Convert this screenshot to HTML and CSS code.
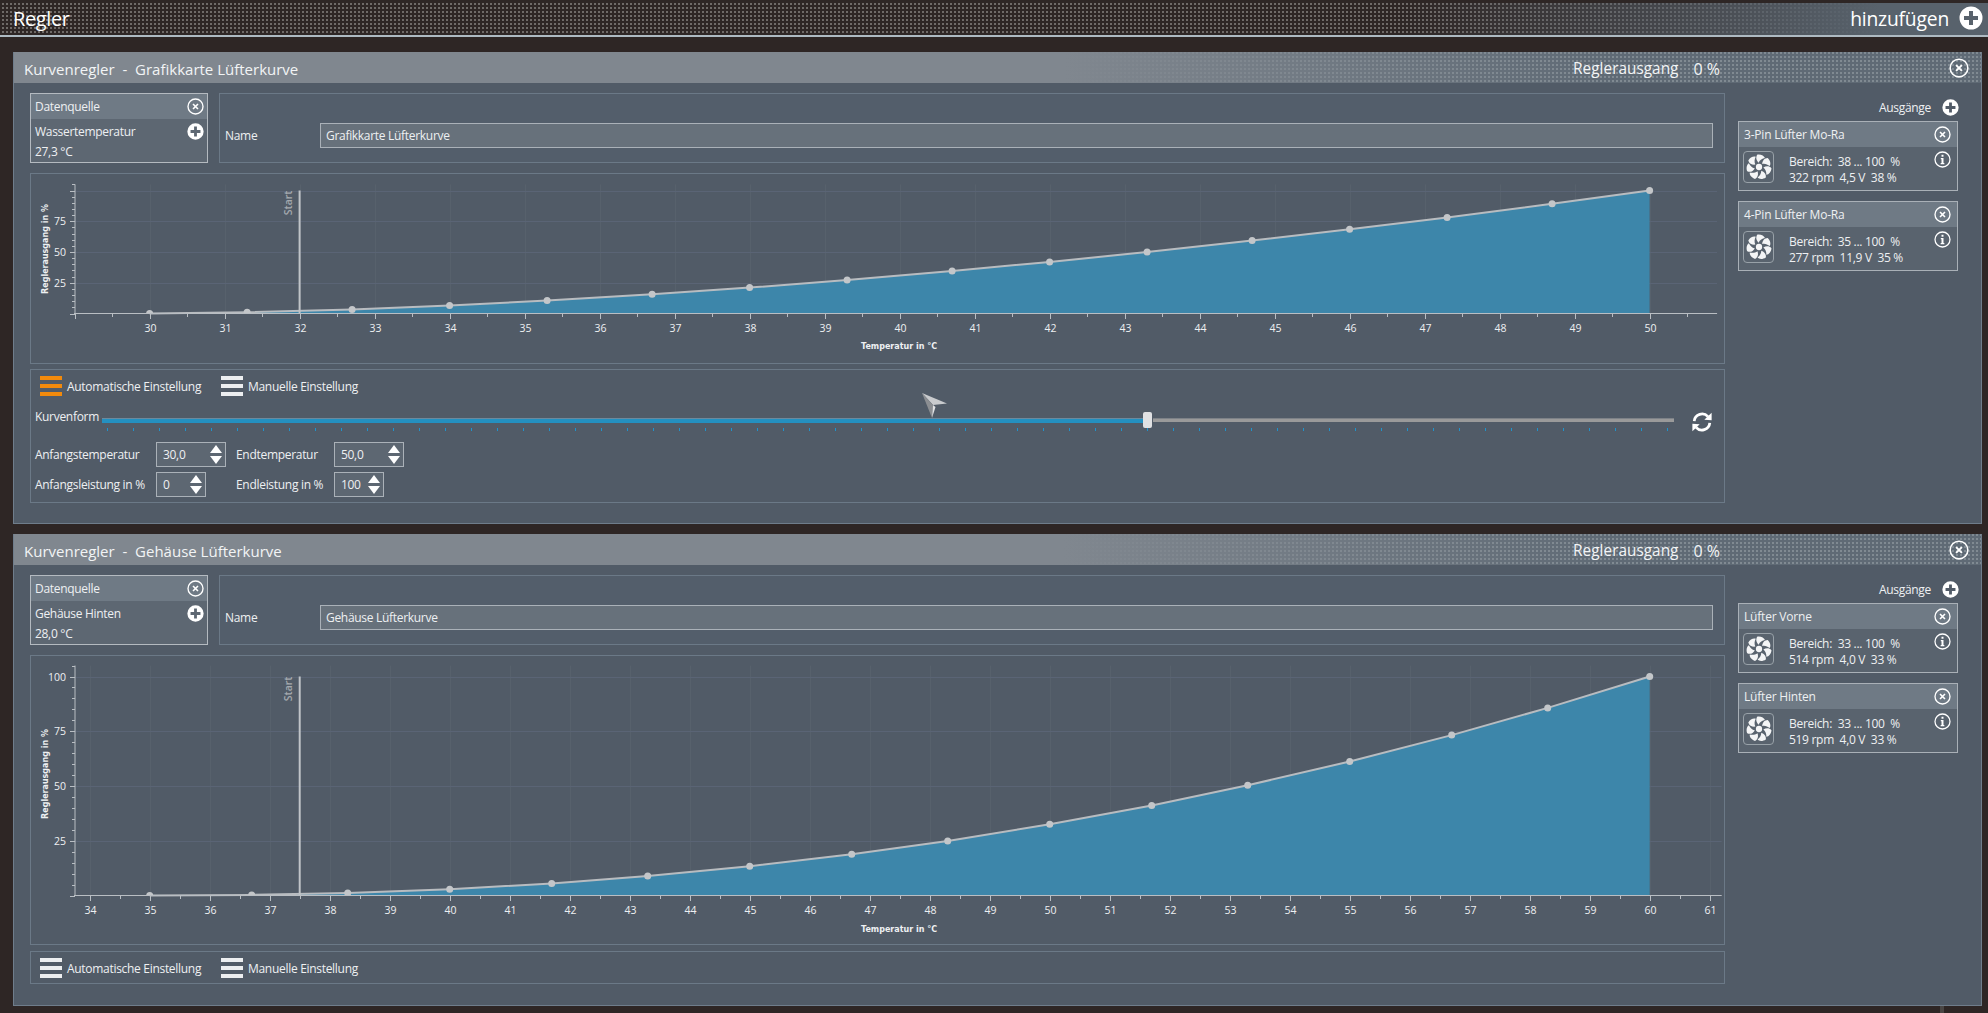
FILE: index.html
```html
<!doctype html>
<html>
<head>
    <meta charset="utf-8">
    <title>Regler</title>
    <link rel="stylesheet" href="styles.css">
</head>
<body>

<svg class="defs" width="0" height="0">
    <symbol id="ic-close" viewBox="0 0 24 24">
        <circle cx="12" cy="12" r="10.6" fill="none" stroke="currentColor" stroke-width="1.9"/>
        <path d="M8.500 8.500l7 7M15.500 8.500l-7 7" fill="none" stroke="currentColor" stroke-width="2.300"/>
    </symbol>
    <symbol id="ic-plus" viewBox="0 0 24 24">
        <path fill="currentColor" fill-rule="evenodd" d="M12 .5a11.5 11.5 0 1 0 0 23a11.5 11.5 0 1 0 0-23z M10 5h4v5h5v4h-5v5h-4v-5H5v-4h5z"/>
    </symbol>
    <symbol id="ic-info" viewBox="0 0 24 24">
        <circle cx="12" cy="12" r="10.6" fill="none" stroke="currentColor" stroke-width="1.8"/>
        <path fill="currentColor" d="M10.600 5.200h2.800v2.800h-2.800z M9.600 10h3.800v7h1.200v1.600H9.400V17h1.200v-5.400h-1z"/>
    </symbol>
    <symbol id="ic-fan" viewBox="0 0 32 32">
        <circle cx="16" cy="16" r="3.600" fill="currentColor"/>
        <g fill="currentColor">
            <path d="M15.500 11C13 8.500 11.800 5 14.200 1.800C18 1.200 22 3 22.800 5.800C19.800 6.400 17 8 15.500 11z"/>
            <path d="M15.500 11C13 8.500 11.800 5 14.200 1.800C18 1.200 22 3 22.800 5.800C19.800 6.400 17 8 15.500 11z" transform="rotate(51.4 16 16)"/>
            <path d="M15.500 11C13 8.500 11.800 5 14.200 1.800C18 1.200 22 3 22.800 5.800C19.800 6.400 17 8 15.500 11z" transform="rotate(102.900 16 16)"/>
            <path d="M15.500 11C13 8.500 11.800 5 14.200 1.800C18 1.200 22 3 22.800 5.800C19.800 6.400 17 8 15.500 11z" transform="rotate(154.300 16 16)"/>
            <path d="M15.500 11C13 8.500 11.800 5 14.200 1.800C18 1.200 22 3 22.800 5.800C19.800 6.400 17 8 15.500 11z" transform="rotate(205.700 16 16)"/>
            <path d="M15.500 11C13 8.500 11.800 5 14.200 1.800C18 1.200 22 3 22.800 5.800C19.800 6.400 17 8 15.500 11z" transform="rotate(257.100 16 16)"/>
            <path d="M15.500 11C13 8.500 11.800 5 14.200 1.800C18 1.200 22 3 22.800 5.800C19.800 6.400 17 8 15.500 11z" transform="rotate(308.600 16 16)"/>
        </g>
    </symbol>
    <symbol id="ic-refresh" viewBox="0 0 24 24">
        <path fill="none" stroke="currentColor" stroke-width="3" d="M3.500 11a8.600 8.600 0 0 1 15-4.800"/>
        <path fill="currentColor" d="M14.500 9.500L22.500 10V2z"/>
        <path fill="none" stroke="currentColor" stroke-width="3" d="M20.500 13a8.600 8.600 0 0 1-15 4.800"/>
        <path fill="currentColor" d="M9.500 14.500L1.500 14v8z"/>
    </symbol>
    <symbol id="ic-cursor" viewBox="0 0 25 25">
        <path fill="#c9cbce" d="M0 0L25 10.500L11 12z"/>
        <path fill="#8b8e92" d="M0 0L11 12L10 25z"/>
        <path fill="#e2e3e5" d="M10 25L11 12L13.500 14z"/>
    </symbol>
</svg>

<div class="topbar">
    <span class="topbar-title">Regler</span>
    <span class="topbar-add">hinzufügen</span>
    <svg class="ic ic-top"><use href="#ic-plus"/></svg>
</div>

<div class="main">

    <div class="panel">
        <div class="panel-head">
            <span class="panel-title">Kurvenregler&nbsp; -&nbsp; Grafikkarte Lüfterkurve</span>
            <span class="panel-out">Reglerausgang</span>
            <span class="panel-val">0 %</span>
            <svg class="ic ic-head"><use href="#ic-close"/></svg>
        </div>
        <div class="panel-body">
            <div class="left">
                <div class="top-row">
                    <div class="source">
                        <div class="source-head"><span>Datenquelle</span><svg class="ic"><use href="#ic-close"/></svg></div>
                        <div class="source-name"><span>Wassertemperatur</span><svg class="ic"><use href="#ic-plus"/></svg></div>
                        <div class="source-val">27,3 °C</div>
                    </div>
                    <div class="name-box">
                        <span class="name-label">Name</span>
                        <div class="name-input">Grafikkarte Lüfterkurve</div>
                    </div>
                </div>
                <div class="box chart chart-short" id="chart-a"></div>
                <div class="box controls">
                    <div class="modes">
                        <div class="bars bars-on"><i></i><i></i><i></i></div>
                        <span class="mode-text">Automatische Einstellung</span>
                        <div class="bars"><i></i><i></i><i></i></div>
                        <span>Manuelle Einstellung</span>
                    </div>
                    <div class="slider-row">
                        <span class="slider-label">Kurvenform</span>
                        <div class="slider">
                            <div class="track">
                                <div class="track-on"></div>
                                <div class="thumb"></div>
                                <div class="track-off"></div>
                            </div>
                            <div class="ticks"></div>
                        </div>
                        <svg class="ic-refresh"><use href="#ic-refresh"/></svg>
                        <svg class="ic-cursor"><use href="#ic-cursor"/></svg>
                    </div>
                    <div class="spins">
                        <span>Anfangstemperatur</span>
                        <div class="spin spin-wide"><span>30,0</span><div class="arrows"><i class="up"></i><i class="down"></i></div></div>
                        <span>Endtemperatur</span>
                        <div class="spin spin-wide"><span>50,0</span><div class="arrows"><i class="up"></i><i class="down"></i></div></div>
                        <span>Anfangsleistung in %</span>
                        <div class="spin"><span>0</span><div class="arrows"><i class="up"></i><i class="down"></i></div></div>
                        <span>Endleistung in %</span>
                        <div class="spin"><span>100</span><div class="arrows"><i class="up"></i><i class="down"></i></div></div>
                    </div>
                </div>
            </div>
            <div class="right">
                <div class="out-head"><span>Ausgänge</span><svg class="ic"><use href="#ic-plus"/></svg></div>
                <div class="card">
                    <div class="card-head"><span>3-Pin Lüfter Mo-Ra</span><svg class="ic"><use href="#ic-close"/></svg></div>
                    <div class="card-body">
                        <div class="fan"><svg><use href="#ic-fan"/></svg></div>
                        <div class="card-text">Bereich:&nbsp; 38 ... 100&nbsp; %<br>322 rpm&nbsp; 4,5 V&nbsp; 38 %</div>
                        <svg class="ic"><use href="#ic-info"/></svg>
                    </div>
                </div>
                <div class="card">
                    <div class="card-head"><span>4-Pin Lüfter Mo-Ra</span><svg class="ic"><use href="#ic-close"/></svg></div>
                    <div class="card-body">
                        <div class="fan"><svg><use href="#ic-fan"/></svg></div>
                        <div class="card-text">Bereich:&nbsp; 35 ... 100&nbsp; %<br>277 rpm&nbsp; 11,9 V&nbsp; 35 %</div>
                        <svg class="ic"><use href="#ic-info"/></svg>
                    </div>
                </div>
            </div>
        </div>
    </div>

    <div class="panel">
        <div class="panel-head">
            <span class="panel-title">Kurvenregler&nbsp; -&nbsp; Gehäuse Lüfterkurve</span>
            <span class="panel-out">Reglerausgang</span>
            <span class="panel-val">0 %</span>
            <svg class="ic ic-head"><use href="#ic-close"/></svg>
        </div>
        <div class="panel-body">
            <div class="left">
                <div class="top-row">
                    <div class="source">
                        <div class="source-head"><span>Datenquelle</span><svg class="ic"><use href="#ic-close"/></svg></div>
                        <div class="source-name"><span>Gehäuse Hinten</span><svg class="ic"><use href="#ic-plus"/></svg></div>
                        <div class="source-val">28,0 °C</div>
                    </div>
                    <div class="name-box">
                        <span class="name-label">Name</span>
                        <div class="name-input">Gehäuse Lüfterkurve</div>
                    </div>
                </div>
                <div class="box chart chart-tall" id="chart-b"></div>
                <div class="box controls">
                    <div class="modes">
                        <div class="bars"><i></i><i></i><i></i></div>
                        <span class="mode-text">Automatische Einstellung</span>
                        <div class="bars"><i></i><i></i><i></i></div>
                        <span>Manuelle Einstellung</span>
                    </div>
                </div>
            </div>
            <div class="right">
                <div class="out-head"><span>Ausgänge</span><svg class="ic"><use href="#ic-plus"/></svg></div>
                <div class="card">
                    <div class="card-head"><span>Lüfter Vorne</span><svg class="ic"><use href="#ic-close"/></svg></div>
                    <div class="card-body">
                        <div class="fan"><svg><use href="#ic-fan"/></svg></div>
                        <div class="card-text">Bereich:&nbsp; 33 ... 100&nbsp; %<br>514 rpm&nbsp; 4,0 V&nbsp; 33 %</div>
                        <svg class="ic"><use href="#ic-info"/></svg>
                    </div>
                </div>
                <div class="card">
                    <div class="card-head"><span>Lüfter Hinten</span><svg class="ic"><use href="#ic-close"/></svg></div>
                    <div class="card-body">
                        <div class="fan"><svg><use href="#ic-fan"/></svg></div>
                        <div class="card-text">Bereich:&nbsp; 33 ... 100&nbsp; %<br>519 rpm&nbsp; 4,0 V&nbsp; 33 %</div>
                        <svg class="ic"><use href="#ic-info"/></svg>
                    </div>
                </div>
            </div>
        </div>
    </div>

</div>
<div class="foot-mark"></div>

<script type="text/javascript" src="chart.js"></script>
</body>
</html>
```

FILE: styles.css
```css
*{margin: 0; padding: 0; box-sizing: border-box;}
html,body{width: 100%; height: 100%; overflow: hidden;}
body{background-color: #2e2625; color: #eef0f2; font-family: "Open Sans", "Noto Sans", sans-serif; font-size: 12px; letter-spacing: -.3px;}
.defs{display: block; width: 0; height: 0;}
.ic{width: 17px; height: 17px; color: #fff; flex: none;}

.topbar{display: flex; align-items: center; height: 34px; margin-top: 3px; padding: 0 5px 2px 13px; border-bottom: 2px solid #aebac2;
    background-color: #2e2625;
    background-image: linear-gradient(90deg, rgba(88,98,108,0) 1400px, #58626c 1880px), conic-gradient(#6f6a68 25%, transparent 0);
    background-size: auto, 4px 4px;}
.topbar-title{font-size: 20px; color: #fff; flex: 1; letter-spacing: -.4px;}
.topbar-add{font-size: 19.3px; color: #fff; margin-right: 10px; letter-spacing: -.2px;}
.ic-top{width: 24px; height: 24px;}

.main{display: flex; flex-direction: column; gap: 10px; padding: 15px 6px 0 13px;}
.panel{height: 472px; background: #515b67; border: 1px solid #6f7d8b; border-top: 0;}
.panel-head{display: flex; align-items: center; height: 31px; padding: 2px 12px 0 10px; color: #f2f4f5; font-size: 15px; letter-spacing: 0;
    background-color: #5f6a75;
    background-image: linear-gradient(90deg, #80878f 1050px, rgba(128,135,143,0) 1600px), conic-gradient(#808a92 25%, transparent 0);
    background-size: auto, 4px 4px;}
.panel-title{flex: 1;}
.panel-out{font-size: 15.4px;}
.panel-val{margin: 0 229px 0 15px; font-size: 16px;}
.ic-head{width: 20px; height: 20px; margin-top: -2px;}

.panel-body{display: flex; padding: 10px 16px 0;}
.left{width: 1695px; display: flex; flex-direction: column;}
.box{border: 1px solid #6b7987;}
.top-row{display: flex; gap: 11px; height: 70px;}
.source{width: 178px; border: 1px solid #b4bac0; background: #5d6772;}
.source-head{display: flex; align-items: center; justify-content: space-between; height: 25px; padding: 0 3px 0 4px; background: #6f7a85;}
.source-name{display: flex; align-items: center; justify-content: space-between; height: 25px; padding: 0 3px 0 4px;}
.source-val{padding-left: 4px; line-height: 16px;}
.name-box{flex: 1; display: flex; align-items: center; padding: 14px 11px 0 5px; border: 1px solid #6b7987; background: #535e6b;}
.name-label{width: 95px;}
.name-input{flex: 1; height: 25px; line-height: 23px; padding-left: 5px; border: 1px solid #aab1b8; background: #67717b;}

.chart{margin-top: 10px;}
.chart svg{display: block; width: 100%; height: 100%;}
.chart-short{height: 191px;}
.chart-tall{height: 290px;}
.tick-label{fill: #eef0f2; font-size: 10.5px; text-anchor: middle; font-family: "Open Sans", sans-serif; letter-spacing: 0;}
.axis-title{fill: #eef0f2; font-size: 8px; font-weight: bold; text-anchor: middle; font-family: "DejaVu Sans", sans-serif; letter-spacing: 0;}
.start-label{fill: #a4a9ae; font-size: 10.5px; text-anchor: end; font-family: "Open Sans", sans-serif; font-weight: 600; letter-spacing: 0;}

.controls{margin-top: 5px; padding: 6px 0 5px 4px;}
.chart-tall + .controls{margin-top: 6px;}
.modes{display: flex; align-items: center; height: 20px; padding-left: 5px;}
.bars{display: flex; flex-direction: column; justify-content: space-between; width: 22px; height: 20px; margin-right: 5px;}
.bars i{display: block; height: 4px; background: #eceef0;}
.bars-on i{background: #f28a0c;}
.mode-text{width: 154px;}
.slider-row{display: flex; align-items: flex-start; margin-top: 16px; position: relative;}
.slider-label{width: 67px; margin-top: -4px;}
.slider{flex: 1;}
.track{display: flex; align-items: center; height: 16px;}
.track-on{width: 1041px; height: 5px; background: #2490c0; border-top: 1px solid #6b8a9e;}
.thumb{width: 9px; height: 16px; margin-right: 1px; border-radius: 2px; background: #e0e1e3;}
.track-off{flex: 1; height: 4px; background: #9a9a9a; border-top: 1px solid #7d8288;}
.ticks{height: 3px; margin-left: 5px; background: repeating-linear-gradient(90deg, #1f93cc 0, #1f93cc 1px, transparent 1px, transparent 26px);}
.ic-refresh{width: 22px; height: 22px; margin: -1px 11px 0 17px; color: #fff; flex: none;}
.ic-cursor{position: absolute; left: 887px; top: -19px; width: 25px; height: 25px;}
.spins{display: grid; grid-template-columns: 121px 80px 98px auto; row-gap: 5px; align-items: center; margin-top: 9px;}
.spin{display: flex; align-items: center; justify-content: space-between; width: 50px; height: 25px; padding: 0 3px 0 6px; border: 1px solid #aab1b8; background: #5d6772;}
.spin-wide{width: 70px;}
.arrows{display: flex; flex-direction: column; gap: 3px;}
.arrows i{display: block; width: 0; height: 0; border-left: 6.5px solid transparent; border-right: 6.5px solid transparent;}
.arrows .up{border-bottom: 8px solid #fff;}
.arrows .down{border-top: 8px solid #fff;}

.right{width: 220px; margin-left: 13px;}
.out-head{display: flex; align-items: center; justify-content: flex-end; height: 28px;}
.out-head .ic{margin-left: 11px; margin-right: -1px;}
.card{height: 70px; margin-bottom: 10px; border: 1px solid #a9b0b7; background: #59636e;}
.card-head{display: flex; align-items: center; justify-content: space-between; height: 25px; padding: 0 6px 0 5px; background: #6f7a85; letter-spacing: -.2px;}
.card-body{display: flex; padding: 4px 6px 0 4px;}
.fan{display: flex; align-items: center; justify-content: center; width: 31px; height: 32px; border: 1px solid #98a1a8; border-radius: 4px; color: #f4f5f6;}
.fan svg{width: 28px; height: 28px;}
.card-text{flex: 1; margin: 3px 0 0 15px; line-height: 16px;}
.foot-mark{width: 4px; height: 8px; margin: 0 0 0 1940px; background: #4a4644;}
```

FILE: chart.js
```js
// builds the two curve charts, coordinates are relative to the chart box
(function() {
    var charts = [{
        el: 'chart-a',
        x0: 118.6, tStart: 30, pxT: 75, tMin: 29, tMax: 50.9, tFirstLabel: 30,
        axisY: 139.5, pxV: 1.23, vTop: 105, w: 1689,
        pts: [30, 31.3, 32.7, 34, 35.3, 36.7, 38, 39.3, 40.7, 42, 43.3, 44.7, 46, 47.3, 48.7, 50],
        tEnd: 50, pow: 1.7, start: 32, show100: false, titleY: 75, xTitleY: 175
    }, {
        el: 'chart-b',
        x0: 118.7, tStart: 35, pxT: 60, tMin: 34, tMax: 61.2, tFirstLabel: 34,
        axisY: 239.5, pxV: 2.19, vTop: 105, w: 1689,
        pts: [35, 36.7, 38.3, 40, 41.7, 43.3, 45, 46.7, 48.3, 50, 51.7, 53.3, 55, 56.7, 58.3, 60],
        tEnd: 60, pow: 2.2, start: 37.5, show100: true, titleY: 118, xTitleY: 276
    }];

    function line(x1, y1, x2, y2, color, width) {
        return '<line x1="' + x1 + '" y1="' + y1 + '" x2="' + x2 + '" y2="' + y2 + '" stroke="' + color + '" stroke-width="' + (width || 1) + '"/>';
    }

    charts.forEach(function(c) {
        var axisX = 44,
            s = '',
            top = c.axisY - c.vTop * c.pxV,
            right = c.x0 + (c.tMax - c.tStart) * c.pxT,
            axis = '#b9bec3',
            t, v, x, y;

        function px(t) { return c.x0 + (t - c.tStart) * c.pxT; }
        function py(v) { return c.axisY - v * c.pxV; }
        function val(t) { return 100 * Math.pow((t - c.tStart) / (c.tEnd - c.tStart), c.pow); }

        // grid
        for (t = c.tFirstLabel; t <= c.tMax; t++) {
            x = Math.round(px(t)) + 0.5;
            s += line(x, top, x, c.axisY, '#57616c');
        }
        for (v = 25; v <= 100; v += 25) {
            y = Math.round(py(v)) + 0.5;
            s += line(axisX, y, right, y, '#5a6475');
        }

        // curve
        var pts = c.pts.map(function(t) { return px(t).toFixed(1) + ',' + py(val(t)).toFixed(1); });
        s += '<polygon fill="#3d86aa" points="' + px(c.tStart) + ',' + c.axisY + ' ' + pts.join(' ') + ' ' + px(c.tEnd) + ',' + c.axisY + '"/>';
        s += '<polyline fill="none" stroke="#b8bcc0" stroke-width="2" points="' + pts.join(' ') + '"/>';
        s += '<clipPath id="' + c.el + '-clip"><rect x="0" y="0" width="' + c.w + '" height="' + c.axisY + '"/></clipPath>';
        s += '<g clip-path="url(#' + c.el + '-clip)" fill="#c3c6c9">';
        c.pts.forEach(function(t) {
            s += '<circle cx="' + px(t).toFixed(1) + '" cy="' + py(val(t)).toFixed(1) + '" r="3.5"/>';
        });
        s += '</g>';

        // start marker
        x = px(c.start);
        s += line(x, py(100), x, c.axisY, '#c0c4c8', 2);
        s += '<text class="start-label" transform="translate(' + (x - 8) + ' ' + py(100) + ') rotate(-90)">Start</text>';

        // axes
        s += line(axisX - 1, c.axisY, right, c.axisY, axis);
        s += line(axisX, top, axisX, c.axisY, axis);
        for (t = c.tMin; t <= c.tMax; t += 0.5) {
            x = Math.round(px(t)) + 0.5;
            if (x < axisX) continue;
            s += line(x, c.axisY, x, c.axisY + (t % 1 === 0 ? 5.5 : 3.5), axis);
            if (t % 1 === 0 && t >= c.tFirstLabel) {
                s += '<text class="tick-label" x="' + x + '" y="' + (c.axisY + 18.5) + '">' + t + '</text>';
            }
        }
        for (v = 0; v <= c.vTop; v += 5) {
            y = Math.round(py(v)) + 0.5;
            s += line(v % 25 === 0 ? axisX - 5 : axisX - 3, y, axisX, y, axis);
            if (v && v % 25 === 0 && (v < 100 || c.show100)) {
                s += '<text class="tick-label" x="' + (v === 100 ? 26 : 29) + '" y="' + (y + 3.5) + '">' + v + '</text>';
            }
        }

        // titles
        s += '<text class="axis-title" transform="translate(17 ' + c.titleY + ') rotate(-90)">Reglerausgang in %</text>';
        s += '<text class="axis-title" x="868" y="' + c.xTitleY + '">Temperatur in °C</text>';

        document.getElementById(c.el).innerHTML = '<svg xmlns="http://www.w3.org/2000/svg">' + s + '</svg>';
    });
}());
```
